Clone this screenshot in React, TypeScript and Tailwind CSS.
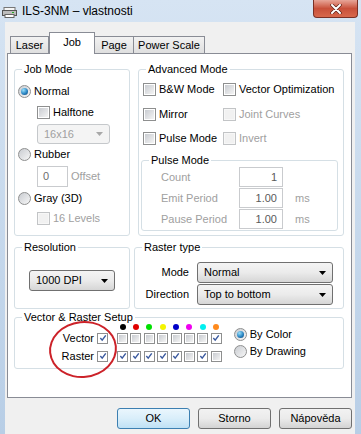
import React from "react";

type Kids = { children?: React.ReactNode };

const Tick = ({ small }: { small?: boolean }) => (
  <svg width={small ? 8 : 9} height={small ? 8 : 9} viewBox="0 0 9 9" className="block">
    <path d="M1.5 4.6 L3.6 7 L7.6 1.6" fill="none" stroke="#3b5a9f" strokeWidth="1.6" />
  </svg>
);

const Check = ({ on, off, small }: { on?: boolean; off?: boolean; small?: boolean }) => (
  <span
    className={`flex shrink-0 items-center justify-center border ${small ? "w-[11px] h-[11px]" : "w-[13px] h-[13px]"} ${
      off ? "border-[#c2c4c6] bg-[#f7f7f7]" : "border-[#8e8f8f] bg-white"
    }`}
  >
    {on ? (
      <Tick small={small} />
    ) : (
      <span
        className={`block ${small ? "w-[7px] h-[7px]" : "w-[9px] h-[9px]"} ${
          off ? "bg-[#f1f1f1]" : "bg-linear-to-br from-[#c9ccd1] to-[#f4f4f4]"
        }`}
      />
    )}
  </span>
);

const Radio = ({ on }: { on?: boolean }) => (
  <span className="flex shrink-0 items-center justify-center w-[13px] h-[13px] rounded-full border border-[#8e8f8f] bg-linear-to-br from-[#c9ccd1] to-[#f7f7f7]">
    {on && (
      <span className="block w-[7px] h-[7px] rounded-full bg-[radial-gradient(circle_at_35%_30%,#9be0fb,#2a86c4_55%,#0c3c6c)]" />
    )}
  </span>
);

const Arrow = ({ grey }: { grey?: boolean }) => (
  <svg width="7" height="4" viewBox="0 0 7 4" className="ml-auto shrink-0">
    <polygon points="0,0 7,0 3.5,4" fill={grey ? "#a8a8a8" : "#000"} />
  </svg>
);

const Combo = ({ text, className, off }: { text: string; className: string; off?: boolean }) => (
  <div
    className={`flex items-center rounded-[3px] border pl-[6px] pr-[6px] ${className} ${
      off
        ? "border-[#c5c8cb] bg-[#f4f4f4] text-[#a0a0a0]"
        : "border-[#707070] bg-linear-to-b from-[#f4f4f4] via-[#ebebeb] to-[#d6d6d6]"
    }`}
  >
    <span>{text}</span>
    <Arrow grey={off} />
  </div>
);

const Box = ({ text, className }: { text: string; className: string }) => (
  <div className={`flex items-center justify-end border border-[#c9cbce] bg-white pr-[5px] text-[#5a5a5a] ${className}`}>
    {text}
  </div>
);

const Group = ({ title, className, children }: Kids & { title: string; className: string }) => (
  <fieldset className={`rounded-[3px] border border-[#d5dfe5] ${className}`}>
    <legend className="ml-[7px] px-[2px] leading-[14px]">{title}</legend>
    {children}
  </fieldset>
);

const Button = ({ text, main }: { text: string; main?: boolean }) => (
  <div
    className={`flex h-[21px] w-[73px] items-center justify-center rounded-[3px] border ${
      main
        ? "border-[#3c7fb1] bg-linear-to-b from-[#eaf6fd] via-[#d9eefa] to-[#bfe1f5]"
        : "border-[#707070] bg-linear-to-b from-[#f2f2f2] via-[#ebebeb] to-[#d3d3d3]"
    }`}
  >
    {text}
  </div>
);

const dots = ["#000000", "#e00000", "#00e000", "#f4f400", "#0000c8", "#f000f0", "#00f0f0", "#ff8a1c"];
const vectorRow = [false, false, false, false, false, false, false, true];
const rasterRow = [true, true, true, true, true, false, true, false];

export default function App() {
  return (
    <div className="relative h-[434px] w-[361px] overflow-hidden bg-linear-to-b from-[#d6e4f3] to-[#b8cee6] font-['Liberation_Sans',Arial,sans-serif] text-[11px] text-black">
      {/* title bar */}
      <div className="flex h-[22px] items-start">
        <svg width="15" height="11" viewBox="0 0 15 11" className="ml-[2px] mt-[7px]">
          <rect x="2" y="0.5" width="11" height="3" fill="#f5f5f5" stroke="#777" />
          <rect x="0.5" y="3.5" width="14" height="5" fill="#bdbdbd" stroke="#555" />
          <rect x="3" y="7.5" width="9" height="3" fill="#fff" stroke="#666" />
          <rect x="10" y="5" width="2" height="1" fill="#2a2" />
        </svg>
        <span className="ml-[5px] mt-[4px] text-[12px] leading-[15px]">ILS-3NM – vlastnosti</span>
        <div className="ml-auto mr-[3px] flex h-[18px] w-[45px] items-center justify-center rounded-b-[4px] border border-t-0 border-[#7a3025] bg-linear-to-b from-[#e7a598] via-[#c8503a] to-[#d8684c]">
          <svg width="12" height="10" viewBox="0 0 12 10">
            <path d="M2 1 L10 9 M10 1 L2 9" stroke="#5b2017" strokeWidth="3.4" strokeLinecap="round" />
            <path d="M2 1 L10 9 M10 1 L2 9" stroke="#fff" strokeWidth="2" strokeLinecap="round" />
          </svg>
        </div>
      </div>

      {/* window body */}
      <div className="ml-[5px] mr-[6px] h-[412px] bg-[#f0f0f0] pt-[10px]">
        {/* tabs */}
        <div className="ml-[5px] flex h-[21px] items-end">
          <div className="flex h-[17px] w-[39px] items-center justify-center border border-b-0 border-[#898c95] bg-linear-to-b from-[#f2f2f2] to-[#dfdfdf]">Laser</div>
          <div className="relative z-10 -mb-px flex h-[22px] w-[46px] items-center justify-center border border-b-0 border-[#898c95] bg-white pb-[2px]">Job</div>
          <div className="flex h-[17px] w-[39px] items-center justify-center border border-b-0 border-l-0 border-[#898c95] bg-linear-to-b from-[#f2f2f2] to-[#dfdfdf]">Page</div>
          <div className="flex h-[17px] w-[71px] items-center justify-center border border-b-0 border-l-0 border-[#898c95] bg-linear-to-b from-[#f2f2f2] to-[#dfdfdf]">Power Scale</div>
        </div>

        {/* tab page */}
        <div className="ml-[2px] h-[345px] w-[345px] border border-[#898c95] bg-white pl-[6px] pt-[8px]">
          <div className="flex gap-[8px]">
            <Group title="Job Mode" className="h-[174px] w-[116px]">
              <div className="flex flex-col pl-[3px]">
                <div className="mt-[7px] flex h-[16px] items-center gap-[3px]">
                  <Radio on />
                  <span>Normal</span>
                </div>
                <div className="ml-[19px] mt-[5px] flex h-[16px] items-center gap-[3px]">
                  <Check />
                  <span>Halftone</span>
                </div>
                <Combo text="16x16" off className="ml-[19px] mt-[4px] h-[20px] w-[73px]" />
                <div className="mt-[2px] flex h-[16px] items-center gap-[3px]">
                  <Radio />
                  <span>Rubber</span>
                </div>
                <div className="ml-[19px] mt-[4px] flex items-center">
                  <div className="flex h-[21px] w-[31px] items-center border border-[#c9cbce] bg-white pl-[5px] text-[#6d6d6d]">0</div>
                  <span className="ml-[3px] text-[#a0a0a0]">Offset</span>
                </div>
                <div className="mt-[3px] flex h-[16px] items-center gap-[3px]">
                  <Radio />
                  <span>Gray (3D)</span>
                </div>
                <div className="ml-[19px] mt-[4px] flex h-[16px] items-center gap-[3px]">
                  <Check off />
                  <span className="text-[#a0a0a0]">16 Levels</span>
                </div>
              </div>
            </Group>

            <Group title="Advanced Mode" className="h-[174px] w-[206px]">
              <div className="flex flex-col">
                <div className="mt-[5px] flex h-[16px] items-center pl-[4px]">
                  <div className="flex w-[80px] items-center gap-[3px]">
                    <Check />
                    <span>B&amp;W Mode</span>
                  </div>
                  <div className="flex items-center gap-[3px]">
                    <Check />
                    <span>Vector Optimization</span>
                  </div>
                </div>
                <div className="mt-[9px] flex h-[16px] items-center pl-[4px]">
                  <div className="flex w-[80px] items-center gap-[3px]">
                    <Check />
                    <span>Mirror</span>
                  </div>
                  <div className="flex items-center gap-[3px]">
                    <Check off />
                    <span className="text-[#a0a0a0]">Joint Curves</span>
                  </div>
                </div>
                <div className="mt-[8px] flex h-[16px] items-center pl-[4px]">
                  <div className="flex w-[80px] items-center gap-[3px]">
                    <Check />
                    <span>Pulse Mode</span>
                  </div>
                  <div className="flex items-center gap-[3px]">
                    <Check off />
                    <span className="text-[#a0a0a0]">Invert</span>
                  </div>
                </div>
                <Group title="Pulse Mode" className="ml-[2px] mt-[7px] h-[78px] w-[197px]">
                  <div className="flex flex-col gap-[1px] pl-[19px] text-[#a0a0a0]">
                    <div className="flex h-[20px] items-center">
                      <span className="w-[78px]">Count</span>
                      <Box text="1" className="h-[20px] w-[44px]" />
                    </div>
                    <div className="flex h-[20px] items-center">
                      <span className="w-[78px]">Emit Period</span>
                      <Box text="1.00" className="h-[20px] w-[44px]" />
                      <span className="ml-[12px]">ms</span>
                    </div>
                    <div className="flex h-[20px] items-center">
                      <span className="w-[78px]">Pause Period</span>
                      <Box text="1.00" className="h-[20px] w-[44px]" />
                      <span className="ml-[12px]">ms</span>
                    </div>
                  </div>
                </Group>
              </div>
            </Group>
          </div>

          <div className="mt-[4px] flex gap-[4px]">
            <Group title="Resolution" className="h-[69px] w-[116px]">
              <Combo text="1000 DPI" className="ml-[14px] mt-[16px] h-[21px] w-[86px]" />
            </Group>
            <Group title="Raster type" className="h-[69px] w-[210px]">
              <div className="flex flex-col gap-[1px] pt-[8px]">
                <div className="flex items-center">
                  <span className="w-[54px] text-right">Mode</span>
                  <Combo text="Normal" className="ml-[8px] h-[21px] w-[136px]" />
                </div>
                <div className="flex items-center">
                  <span className="w-[54px] text-right">Direction</span>
                  <Combo text="Top to bottom" className="ml-[8px] h-[21px] w-[136px]" />
                </div>
              </div>
            </Group>
          </div>

          <Group title="Vector & Raster Setup" className="mt-[1px] h-[59px] w-[330px]">
            <div className="flex">
              <div className="flex flex-col">
                <div className="flex h-[6px] pl-[102px]">
                  <div className="flex gap-[2.4px]">
                    {dots.map((c) => (
                      <span key={c} className="flex w-[11px] justify-center">
                        <span className="block h-[6px] w-[6px] rounded-full" style={{ background: c }} />
                      </span>
                    ))}
                  </div>
                </div>
                <div className="mt-[1px] flex h-[14px] items-center">
                  <span className="w-[79px] text-right">Vector</span>
                  <span className="ml-[3px]">
                    <Check small on />
                  </span>
                  <div className="ml-[9px] flex gap-[2.4px]">
                    {vectorRow.map((v, i) => (
                      <Check key={i} small on={v} />
                    ))}
                  </div>
                </div>
                <div className="mt-[4px] flex h-[14px] items-center">
                  <span className="w-[79px] text-right">Raster</span>
                  <span className="ml-[3px]">
                    <Check small on />
                  </span>
                  <div className="ml-[9px] flex gap-[2.4px]">
                    {rasterRow.map((v, i) => (
                      <Check key={i} small on={v} />
                    ))}
                  </div>
                </div>
              </div>
              <div className="ml-[12px] mt-[2px] flex flex-col gap-[1px]">
                <div className="flex h-[16px] items-center gap-[3px]">
                  <Radio on />
                  <span>By Color</span>
                </div>
                <div className="flex h-[16px] items-center gap-[3px]">
                  <Radio />
                  <span>By Drawing</span>
                </div>
              </div>
            </div>
          </Group>
        </div>

        {/* dialog buttons */}
        <div className="mt-[10px] flex justify-end gap-[8px] pr-[3px]">
          <Button text="OK" main />
          <Button text="Storno" />
          <Button text="Nápověda" />
        </div>
      </div>

      {/* red annotation ellipse */}
      <div className="absolute left-[49px] top-[321px] h-[57px] w-[68px] -rotate-6 rounded-[50%] border-[2.5px] border-[#cc2229]" />
    </div>
  );
}
